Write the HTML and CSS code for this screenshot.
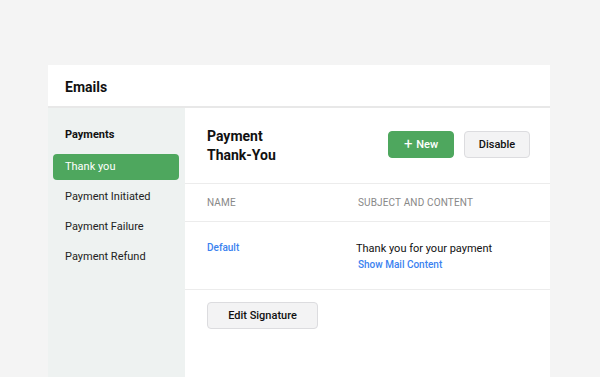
FILE: index.html
```html
<!DOCTYPE html>
<html lang="en">
<head>
    <meta charset="UTF-8">
    <meta name="viewport" content="width=device-width, initial-scale=1.0">
    <title>Emails</title>
    <link rel="stylesheet" href="styles.css">
</head>
<body>
    <div class="card">
        <div class="card-header">Emails</div>
        <div class="card-body">
            <div class="sidebar">
                <div class="sidebar-title">Payments</div>
                <div class="nav-item active">Thank you</div>
                <div class="nav-item">Payment Initiated</div>
                <div class="nav-item">Payment Failure</div>
                <div class="nav-item">Payment Refund</div>
            </div>
            <div class="main">
                <div class="main-header">
                    <h2 class="main-title">Payment<br>Thank-You</h2>
                    <div class="actions">
                        <button class="btn btn-green"><span class="plus">+</span> New</button>
                        <button class="btn btn-grey">Disable</button>
                    </div>
                </div>
                <div class="table-head">
                    <div class="col-name">NAME</div>
                    <div class="col-subject">SUBJECT AND CONTENT</div>
                </div>
                <div class="table-row">
                    <div class="col-name"><a class="link">Default</a></div>
                    <div class="col-subject">
                        <div class="subject">Thank you for your payment</div>
                        <a class="link show-content">Show Mail Content</a>
                    </div>
                </div>
                <div class="footer">
                    <button class="btn btn-grey btn-wide">Edit Signature</button>
                </div>
            </div>
        </div>
    </div>
</body>
</html>
```

FILE: styles.css
```css
body {
    margin: 0;
    background: #f4f4f4;
    font-family: Roboto, "Noto Sans", sans-serif;
    color: #111;
    height: 377px;
    overflow: hidden;
}
.card {
    margin: 65px 0 0 48px;
    width: 502px;
    height: 312px;
    background: #fff;
    display: flex;
    flex-direction: column;
}
.card-header {
    height: 43px;
    box-sizing: border-box;
    padding: 3px 0 0 17px;
    display: flex;
    align-items: center;
    font-size: 14px;
    font-weight: 700;
    border-bottom: 2px solid #e8e8e8;
}
.card-body {
    flex: 1;
    display: flex;
}
.sidebar {
    width: 137px;
    background: #eef2f1;
    padding: 19px 6px 0 5px;
    box-sizing: border-box;
}
.sidebar-title {
    font-size: 11px;
    font-weight: 700;
    padding-left: 12px;
    height: 16px;
    line-height: 16px;
    margin-bottom: 11px;
}
.nav-item {
    height: 26px;
    line-height: 26px;
    padding-left: 12px;
    margin-bottom: 4px;
    font-size: 11px;
    color: #222;
    border-radius: 4px;
}
.nav-item.active {
    background: #4ea75e;
    color: #fff;
}
.main {
    flex: 1;
    display: flex;
    flex-direction: column;
}
.main-header {
    height: 75px;
    display: flex;
    align-items: center;
    justify-content: space-between;
    padding: 0 20px 0 22px;
    border-bottom: 1px solid #ececec;
}
.main-title {
    margin: 1px 0 0;
    font-size: 14px;
    font-weight: 700;
    line-height: 19px;
}
.actions {
    display: flex;
    gap: 10px;
    margin-bottom: 2px;
}
.btn {
    height: 27px;
    width: 66px;
    border-radius: 4px;
    font-family: inherit;
    font-size: 11px;
    font-weight: 500;
    cursor: pointer;
    padding: 0;
}
.btn-green {
    background: #4ea75e;
    border: 1px solid #4ea75e;
    color: #fff;
}
.plus {
    font-size: 15px;
    font-weight: 400;
    line-height: 1;
    vertical-align: -1px;
    margin-right: 1px;
}
.btn-grey {
    background: #f3f3f4;
    border: 1px solid #dcdcdf;
    color: #111;
}
.btn-wide {
    width: 111px;
}
.table-head,
.table-row {
    display: flex;
    padding-left: 22px;
    border-bottom: 1px solid #ececec;
}
.table-head {
    height: 37px;
    align-items: center;
    font-size: 10px;
    color: #888;
    letter-spacing: 0.15px;
}
.col-name {
    width: 151px;
}
.table-row {
    height: 68px;
    box-sizing: border-box;
    padding-top: 19px;
}
.table-row .col-name {
    font-size: 10px;
    line-height: 14px;
}
.link {
    color: #3b82f0;
    font-size: 10px;
    font-weight: 500;
}
.table-row .col-subject {
    margin-left: -2px;
    padding-top: 1px;
}
.subject {
    font-size: 11px;
    line-height: 14px;
}
.show-content {
    display: block;
    margin-left: 2px;
    margin-top: 2px;
    line-height: 14px;
}
.footer {
    padding: 12px 0 0 22px;
}
```
